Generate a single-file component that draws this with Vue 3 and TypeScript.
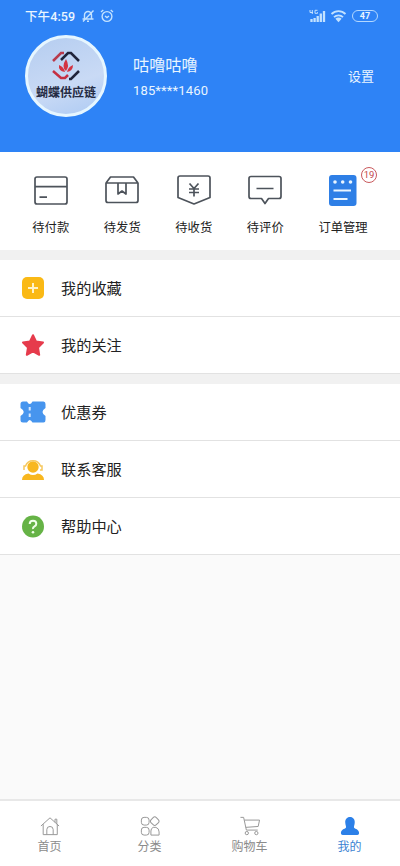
<script setup lang="ts">
interface Entry {
  id: string
  label: string
}

const orders: Entry[] = [
  { id: 'pay', label: '待付款' },
  { id: 'ship', label: '待发货' },
  { id: 'receive', label: '待收货' },
  { id: 'review', label: '待评价' },
  { id: 'manage', label: '订单管理' },
]

const groups: Entry[][] = [
  [
    { id: 'favorite', label: '我的收藏' },
    { id: 'follow', label: '我的关注' },
  ],
  [
    { id: 'coupon', label: '优惠券' },
    { id: 'service', label: '联系客服' },
    { id: 'help', label: '帮助中心' },
  ],
]

const tabs: Entry[] = [
  { id: 'home', label: '首页' },
  { id: 'category', label: '分类' },
  { id: 'cart', label: '购物车' },
  { id: 'mine', label: '我的' },
]
const activeTab = 'mine'
const pendingCount = 19
</script>

<template>
  <div class="page">
    <header class="header">
      <div class="status">
        <span class="clock">下午4:59</span>
        <svg class="mute" width="14" height="14" viewBox="0 0 14 14">
          <path d="M3.500 10V6a3.500 3.500 0 0 1 7 0v4zM1.500 10h11M6 12.300h2M2 12.500L12.500 1.500" />
        </svg>
        <svg class="alarm" width="14" height="14" viewBox="0 0 14 14">
          <circle cx="7" cy="7.500" r="4.900" />
          <path d="M1 3l2.300-2M13 3l-2.300-2M5 7l2 1.500L9 7" />
        </svg>
        <svg class="signal" width="17" height="14" viewBox="0 0 17 14">
          <path d="M1 1v2.500h3M3.300 1v4M8.500 1.300H6v3h2.500V3.200" class="thin" />
          <path d="M2.500 13v-3M5.600 13V9M8.700 13V7M11.800 13V4.500M15 13V2" class="bars" />
        </svg>
        <svg class="wifi" width="17" height="14" viewBox="0 0 17 14">
          <path d="M1.500 5a10 10 0 0 1 14 0M4 8.200a6.500 6.500 0 0 1 9 0" />
          <path d="M8.500 13.300L5.400 9.800a4.400 4.400 0 0 1 6.200 0z" class="solid" />
        </svg>
        <span class="battery">47</span>
      </div>
      <div class="profile">
        <div class="avatar">
          <svg width="30" height="30" viewBox="0 0 30 30">
            <path d="M2 10L10 2H13" stroke="#b83a4c" />
            <path d="M10 9L17 2H20L28 10" stroke="#20243b" />
            <path d="M2 20L10 27H14L17 24" stroke="#c52f43" />
            <path d="M18 28H20L28 20" stroke="#20243b" />
            <path d="M15 20Q10 16 15 8Q19 15 15 20ZM14 21Q7 20 8 14Q13 16 14 21ZM16 21Q22 20 22 14Q17 16 16 21Z" fill="#d33443" class="petals" />
          </svg>
          <span class="brand">蝴蝶供应链</span>
        </div>
        <div class="identity">
          <div class="name">咕噜咕噜</div>
          <div class="phone">185****1460</div>
        </div>
        <a class="settings">设置</a>
      </div>
    </header>

    <section class="orders">
      <div v-for="o in orders" :key="o.id" class="order">
        <div class="order-icon">
          <svg width="36" height="34" viewBox="0 0 36 34">
            <g v-if="o.id === 'pay'">
              <rect x="2" y="5" width="32" height="27" rx="2" />
              <path d="M2 14.700H34M6.500 25.200h7.500" />
            </g>
            <g v-else-if="o.id === 'ship'">
              <path d="M2 11V28.500q0 2 2 2H32q2 0 2-2V11zL6.500 5H29.500L34 11M14 11V22L18 19L22 22V11" />
            </g>
            <g v-else-if="o.id === 'receive'">
              <path d="M4 4H32q2 0 2 2V25.500L18 32L2 25.500V6q0-2 2-2zM13.500 11.500L18 16.500L22.500 11.500M13 17H23M13 20.500H23M18 16.500V24.500" />
            </g>
            <g v-else-if="o.id === 'review'">
              <path d="M4 4.500H32q2 0 2 2V24.500q0 2-2 2H21.500L18 31.500L14.500 26.500H4q-2 0-2-2V6.500q0-2 2-2zM9.500 16.500H26.500" />
            </g>
            <g v-else class="sheet">
              <rect x="4" y="3" width="27.500" height="31" rx="3" class="fill" />
              <path d="M8.500 18.500H26M8.500 27H22.500" />
              <circle cx="10" cy="10" r="1.800" />
              <circle cx="17.700" cy="10" r="1.800" />
              <circle cx="25.500" cy="10" r="1.800" />
            </g>
          </svg>
          <span v-if="o.id === 'manage'" class="badge">{{ pendingCount }}</span>
        </div>
        <span>{{ o.label }}</span>
      </div>
    </section>

    <section v-for="(group, i) in groups" :key="i" class="group">
      <div v-for="item in group" :key="item.id" class="row">
        <svg width="28" height="26" viewBox="0 0 28 26">
          <g v-if="item.id === 'favorite'">
            <rect x="3" y="2" width="22" height="22" rx="5" fill="#fab915" />
            <path d="M14 8v10M9 13h10" stroke="#fff3c8" stroke-width="2" />
          </g>
          <path v-else-if="item.id === 'follow'" d="M14 3.200L17 9.400L24 10.500L19 15.500L20.200 22.800L14 19.400L7.800 22.800L9 15.500L4 10.500L11 9.400Z" fill="#e63b4c" stroke="#e63b4c" stroke-width="2" stroke-linejoin="round" />
          <g v-else-if="item.id === 'coupon'">
            <path d="M4 2.500H8Q10.700 7.500 13.500 2.500H24.500Q26.500 2.500 26.500 5V9Q20.500 13 26.500 17V21Q26.500 23.500 24.500 23.500H13.500Q10.700 18.500 8 23.500H4Q1.500 23.500 1.500 21V17Q8 13 1.500 9V5Q1.500 2.500 4 2.500Z" fill="#4795ee" />
            <path d="M10.700 8v3.500M10.700 14.500v3.500" stroke="#d5e8ff" stroke-width="2" />
          </g>
          <g v-else-if="item.id === 'service'" fill="#f8b71f">
            <circle cx="14" cy="11" r="5.700" />
            <path d="M5 14v-4h1.500a8 8 0 0 1 15 0H23v4h-2" fill="none" stroke="#f6c85d" stroke-width="1.500" />
            <path d="M3 24q0-5.500 6.500-6.500q4.500 3 9 0q6.500 1 6.500 6.500z" />
          </g>
          <g v-else>
            <circle cx="14" cy="13.500" r="11" fill="#66b346" />
            <path d="M10.700 11q0-3.300 3.300-3.300t3.300 3q0 1.700-1.800 2.700T14 16" fill="none" stroke="#f0ffe9" stroke-width="2" />
            <circle cx="14" cy="19.200" r="1.300" fill="#f0ffe9" />
          </g>
        </svg>
        <span class="row-label">{{ item.label }}</span>
      </div>
    </section>

    <nav class="tabs">
      <a v-for="t in tabs" :key="t.id" class="tab" :class="{ active: t.id === activeTab }">
        <svg width="22" height="22" viewBox="0 0 22 22">
          <path v-if="t.id === 'home'" d="M1 11L11 2L21 11M3.500 9V20.500H19V9M16.500 7V3.500H18.500V9M7.500 20.500V15a3.500 3.500 0 0 1 7 0V20.500" />
          <g v-else-if="t.id === 'category'">
            <rect x="1.500" y="1.500" width="8.500" height="8.500" rx="3" />
            <rect x="12.200" y="1.700" width="8" height="8" rx="2.500" transform="rotate(45 16.200 5.700)" />
            <rect x="1.500" y="12.500" width="8.500" height="8.500" rx="3" />
            <path d="M14.500 12.500h3q3.500 1 3.500 5v3.500h-9v-4.500q0-3 2.500-4z" />
          </g>
          <g v-else-if="t.id === 'cart'">
            <path d="M.5 1.500H4L7 15.500H19.500M4.800 4.500H21.500L20 11.500L6.300 12.500" />
            <circle cx="7.500" cy="18.800" r="1.800" />
            <circle cx="18" cy="18.800" r="1.800" />
          </g>
          <path v-else class="person" d="M11 1.200C7.500 1.200 5.500 4 5.800 7.500C6 10.500 7 11.500 6.500 13C5 14.500 1 15 1 19Q1 20.800 3 20.800H19Q21 20.800 21 19C21 15 17 14.500 15.500 13C15 11.500 16 10.500 16.200 7.500C16.500 4 14.500 1.200 11 1.200Z" />
        </svg>
        <span>{{ t.label }}</span>
      </a>
    </nav>
  </div>
</template>

<style>
body {
  background: #fafafa;
}
</style>

<style scoped>
.page {
  display: flex;
  flex-direction: column;
  height: 866px;
  background: #fafafa;
  font-family: Roboto, "Noto Sans CJK SC", sans-serif;
  color: #222;
}
svg {
  display: block;
  flex: none;
}
.header {
  height: 152px;
  box-sizing: border-box;
  background: #2e83f6;
  color: #e9f5ff;
}
.status {
  display: flex;
  align-items: center;
  height: 32px;
  padding: 0 22px 0 25px;
}
.status svg {
  fill: none;
  stroke: #c3e2ff;
  stroke-width: 1.4;
}
.clock {
  width: 56px;
  padding-bottom: 2px;
  font-size: 12.5px;
  font-weight: 500;
  letter-spacing: 0.1px;
  white-space: nowrap;
}
.alarm {
  margin-left: 5px;
}
.signal {
  margin-left: auto;
}
.status .thin {
  stroke-width: 1;
}
.status .bars {
  stroke-width: 2.3;
}
.wifi {
  margin-left: 4px;
}
.status .wifi {
  stroke-width: 1.8;
}
.status .solid {
  fill: #c3e2ff;
  stroke: none;
}
.battery {
  width: 26px;
  height: 12px;
  margin-left: 5px;
  box-sizing: border-box;
  border: 1.5px solid #b3d8ff;
  border-radius: 6px;
  font-size: 9px;
  font-weight: 700;
  line-height: 10px;
  text-align: center;
}
.profile {
  display: flex;
  align-items: center;
  height: 88px;
  padding: 0 26px 0 25px;
}
.avatar {
  display: flex;
  flex-direction: column;
  align-items: center;
  width: 82px;
  height: 82px;
  box-sizing: border-box;
  padding-top: 13px;
  border: 3px solid #e6f6ff;
  border-radius: 50%;
  background: linear-gradient(160deg, #b5cdf0, #c9daf5 60%, #adcaf3);
}
.avatar svg {
  fill: none;
  stroke-width: 2.5;
}
.avatar .petals {
  stroke: none;
}
.brand {
  margin-top: 4px;
  font-size: 12px;
  font-weight: 700;
  line-height: 16px;
  color: #252b43;
  white-space: nowrap;
}
.identity {
  padding-top: 4px;
  margin-left: 26px;
}
.name {
  font-size: 16.2px;
  line-height: 24px;
}
.phone {
  margin-top: 1px;
  font-size: 13px;
  line-height: 24px;
  letter-spacing: 0.15px;
}
.settings {
  margin-left: auto;
  padding-bottom: 2px;
  font-size: 13px;
}
.orders {
  display: grid;
  grid-template-columns: repeat(4, 71.5px) 1fr;
  height: 98px;
  box-sizing: border-box;
  padding: 20px 15px 0;
  background: #fff;
}
.order {
  display: flex;
  flex-direction: column;
  align-items: center;
  gap: 12px;
  font-size: 12.3px;
  line-height: 20px;
}
.order-icon {
  position: relative;
}
.order-icon svg {
  fill: none;
  stroke: #4d535b;
  stroke-width: 1.7;
  stroke-linejoin: round;
}
.order-icon .sheet {
  stroke: #e9f5ff;
  stroke-width: 2;
}
.sheet .fill {
  fill: #2e7fe6;
  stroke: none;
}
.sheet circle {
  fill: #e9f5ff;
  stroke: none;
}
.badge {
  position: absolute;
  top: -5px;
  right: -16px;
  width: 16px;
  height: 16px;
  box-sizing: border-box;
  border: 1px solid #c9595c;
  border-radius: 50%;
  font-size: 9.5px;
  line-height: 14px;
  text-align: center;
  color: #c4474b;
}
.group {
  border-top: 10px solid #f1f1f1;
}
.row {
  display: flex;
  align-items: center;
  gap: 14px;
  height: 57px;
  box-sizing: border-box;
  padding-left: 19px;
  border-bottom: 1.5px solid #e2e2e2;
  background: #fff;
  font-size: 15.2px;
}
.row-label {
  padding-bottom: 2px;
}
.tabs {
  display: grid;
  grid-template-columns: repeat(4, 1fr);
  height: 67px;
  box-sizing: border-box;
  margin-top: auto;
  border-top: 2px solid #e8e8e8;
  background: #fff;
}
.tab {
  display: flex;
  flex-direction: column;
  align-items: center;
  gap: 2px;
  padding: 15px 1px 0 0;
  font-size: 12px;
  line-height: 18px;
  color: #8b8b8b;
}
.tab svg {
  width: 20px;
  height: 20px;
  fill: none;
  stroke: #999;
  stroke-width: 1.1;
}
.tab.active {
  color: #3b83d2;
}
.tab .person {
  fill: #2c80e8;
  stroke: none;
}
</style>
